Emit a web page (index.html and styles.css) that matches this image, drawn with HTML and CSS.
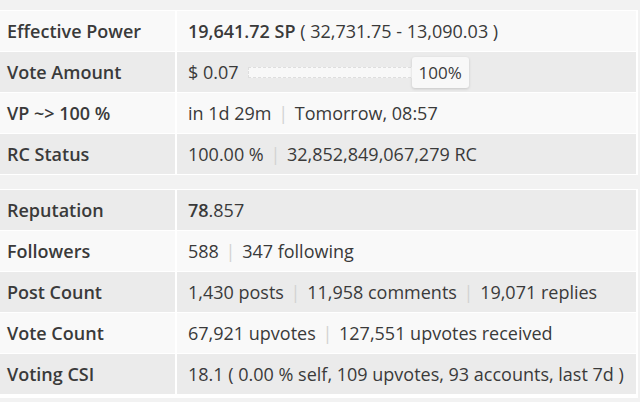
FILE: index.html
```html
<!DOCTYPE html>
<html>
<head>
<meta charset="utf-8">
<link rel="stylesheet" href="styles.css">
</head>
<body>
<div class="page">
  <table class="stats">
    <tr><th>Effective Power</th><td><b>19,641.72 SP</b> ( 32,731.75 - 13,090.03 )</td></tr>
    <tr><th>Vote Amount</th><td><div class="vote"><span>$ 0.07</span><div class="track"></div><span class="pct">100%</span></div></td></tr>
    <tr><th>VP ~&gt; 100 %</th><td>in 1d 29m <span class="sep">|</span> Tomorrow, 08:57</td></tr>
    <tr><th>RC Status</th><td>100.00 % <span class="sep">|</span> 32,852,849,067,279 RC</td></tr>
  </table>
  <table class="stats second">
    <tr><th>Reputation</th><td><b>78</b>.857</td></tr>
    <tr><th>Followers</th><td>588 <span class="sep">|</span> 347 following</td></tr>
    <tr><th>Post Count</th><td>1,430 posts <span class="sep">|</span> 11,958 comments <span class="sep">|</span> 19,071 replies</td></tr>
    <tr><th>Vote Count</th><td>67,921 upvotes <span class="sep">|</span> 127,551 upvotes received</td></tr>
    <tr><th>Voting CSI</th><td>18.1 ( 0.00 % self, 109 upvotes, 93 accounts, last 7d )</td></tr>
  </table>
</div>
</body>
</html>
```
FILE: styles.css
```css
html, body {
  margin: 0;
  padding: 0;
  background: #f2f2f2;
}
body {
  font-family: "Open Sans", "DejaVu Sans", sans-serif;
  color: #3a3a3a;
  font-size: 18px;
}
.page {
  padding-top: 10px;
  width: 638px;
}
.stats {
  width: 100%;
  border-collapse: separate;
  border-spacing: 0;
  border-top: 1px solid #fff;
  border-bottom: 1px solid #fff;
  border-right: 2px solid #fff;
}
.second {
  margin-top: 14px;
  border-bottom: 4px solid #fff;
}
.stats tr:nth-child(odd) th, .stats tr:nth-child(odd) td { background: #f9f9f9; }
.stats tr:nth-child(even) th, .stats tr:nth-child(even) td { background: #ebebeb; }
.second tr:nth-child(odd) th, .second tr:nth-child(odd) td { background: #ebebeb; }
.second tr:nth-child(even) th, .second tr:nth-child(even) td { background: #f9f9f9; }
.stats th, .stats td {
  height: 40px;
  padding: 0;
  border-bottom: 1px solid #fff;
  white-space: nowrap;
  text-align: left;
}
.stats tr:last-child th, .stats tr:last-child td { border-bottom: 0; }
.stats th {
  width: 168px;
  padding-left: 7px;
  font-weight: 600;
  color: #3a3a3a;
  border-right: 2px solid #fff;
}
.stats td {
  padding-left: 11px;
}
.stats b { font-weight: 600; color: #3a3a3a; }
.sep { color: #d2d2d2; padding: 0 2px; }
.vote {
  display: flex;
  align-items: center;
}
.track {
  width: 166px;
  height: 9px;
  margin-left: 9px;
  margin-right: -4px;
  border: 1px dashed #dedede;
  background: #f8f8f8;
}
.pct {
  display: inline-block;
  background: #f8f8f8;
  border-radius: 3px;
  box-shadow: 0 1px 3px rgba(0,0,0,0.16);
  padding: 5px 7px;
  font-size: 17px;
  line-height: 21px;
}
```
